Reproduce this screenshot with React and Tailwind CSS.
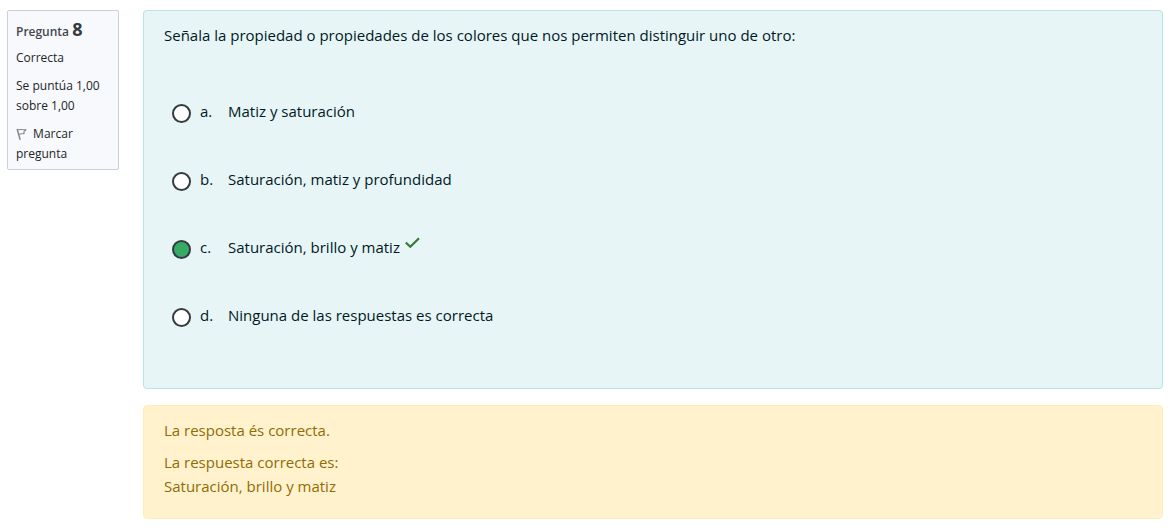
import { useState } from "react";

const options = [
  { key: "a", text: "Matiz y saturación" },
  { key: "b", text: "Saturación, matiz y profundidad" },
  { key: "c", text: "Saturación, brillo y matiz", correct: true },
  { key: "d", text: "Ninguna de las respuestas es correcta" },
];

function FlagIcon() {
  return (
    <svg
      className="mr-0.5 inline-block h-3 w-3 align-[-2px]"
      viewBox="0 0 12 12"
      fill="none"
      stroke="#84888c"
      strokeLinecap="round"
      strokeLinejoin="round"
      aria-hidden="true"
    >
      <path d="M1.3 1.5 4 11.2" strokeWidth="1.5" />
      <path d="M1.6 1.8C4.4 .8 6.4 2.2 10 1.5L7.8 3.8 8.2 5.6C6.5 6.2 5 5.2 3.2 6.2" strokeWidth="1.1" />
    </svg>
  );
}

function CheckIcon() {
  return (
    <svg
      className="mb-2 ml-1 h-3 w-4"
      viewBox="0 0 16 12"
      fill="none"
      stroke="#357a32"
      strokeWidth="2.2"
      role="img"
      aria-label="Correcta"
    >
      <path d="M1.8 5.5 6.3 9.7 15 1.2" />
    </svg>
  );
}

function QuestionInfo() {
  return (
    <aside className="flex w-28 shrink-0 flex-col gap-2 rounded-xs border border-[#cad0d7] bg-[#f8f9fc] px-2 pt-[9px] pb-[5px] text-xs leading-5 text-[#212529]">
      <h3 className="h-5 leading-[18px] font-semibold text-[#42484e]">
        Pregunta <span className="text-lg leading-[18px] font-bold text-[#343a40]">8</span>
      </h3>
      <div>Correcta</div>
      <div>Se puntúa 1,00 sobre 1,00</div>
      <a href="#marcar">
        <FlagIcon /> Marcar pregunta
      </a>
    </aside>
  );
}

export default function App() {
  const [selected, setSelected] = useState("c");

  return (
    <main className="flex items-start gap-6 pt-2.5 pr-[11px] pb-3 pl-[7px] font-['Open_Sans',sans-serif] text-[15px] leading-6">
      <QuestionInfo />
      <div className="flex min-w-0 flex-1 flex-col gap-4">
        <fieldset className="rounded-[4px] border border-[#b8e4e9] bg-[#e7f5f7] px-5 pt-3 pb-[39px] text-[#001a1e]">
          <p>Señala la propiedad o propiedades de los colores que nos permiten distinguir uno de otro:</p>
          <div className="mt-[30px] pl-2">
            {options.map((option) => (
              <div key={option.key} className="flex h-[68px] items-center">
                <input
                  id={`respuesta-${option.key}`}
                  type="radio"
                  name="respuesta"
                  checked={selected === option.key}
                  onChange={() => setSelected(option.key)}
                  className="mt-1 mr-[9px] size-[19px] shrink-0 appearance-none rounded-full border-2 border-[#343a40] bg-white checked:bg-[#35ab65]"
                />
                <label htmlFor={`respuesta-${option.key}`} className="flex">
                  <span className="w-7">{option.key}.</span>
                  <span>{option.text}</span>
                </label>
                {option.correct && <CheckIcon />}
              </div>
            ))}
          </div>
        </fieldset>
        <section className="rounded-[4px] border border-[#ffeeba] bg-[#fff2cd] px-5 pt-3 pb-5 text-[#8f6c06]">
          <p className="mb-2">La resposta és correcta.</p>
          <p>
            La respuesta correcta es:
            <br />
            Saturación, brillo y matiz
          </p>
        </section>
      </div>
    </main>
  );
}
